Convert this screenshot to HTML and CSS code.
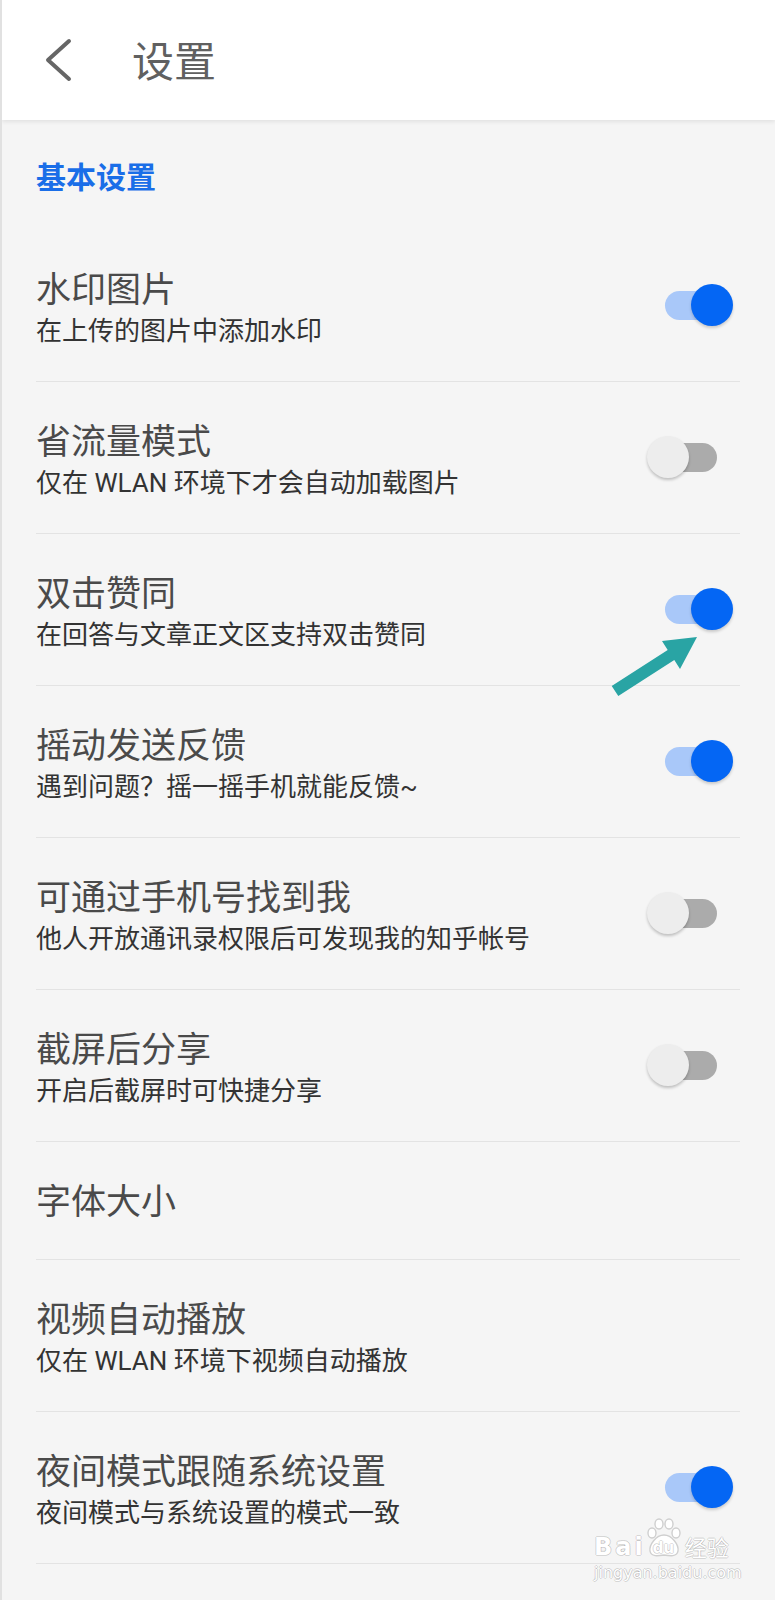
FILE: index.html
```html
<!DOCTYPE html>
<html lang="zh-CN">
<head>
    <meta charset="UTF-8">
    <meta name="viewport" content="width=device-width, initial-scale=1.0">
    <title>设置</title>
    <link rel="stylesheet" href="styles.css">
</head>
<body>
    <div class="page">
        <header class="top-bar">
            <button class="back-button" aria-label="返回">
                <svg width="28" height="44" viewBox="0 0 28 44">
                    <polyline points="24,3 3,22 24,41" fill="none" stroke="#666" stroke-width="4" stroke-linecap="round" stroke-linejoin="round"/>
                </svg>
            </button>
            <h1 class="top-title">设置</h1>
        </header>

        <section class="settings-group">
            <h2 class="group-title">基本设置</h2>
            <ul class="setting-list">
                <li class="setting-item">
                    <div class="setting-text">
                        <div class="setting-name">水印图片</div>
                        <div class="setting-desc">在上传的图片中添加水印</div>
                    </div>
                    <span class="switch on"></span>
                </li>
                <li class="setting-item">
                    <div class="setting-text">
                        <div class="setting-name">省流量模式</div>
                        <div class="setting-desc">仅在 WLAN 环境下才会自动加载图片</div>
                    </div>
                    <span class="switch"></span>
                </li>
                <li class="setting-item">
                    <div class="setting-text">
                        <div class="setting-name">双击赞同</div>
                        <div class="setting-desc">在回答与文章正文区支持双击赞同</div>
                    </div>
                    <span class="switch on"></span>
                </li>
                <li class="setting-item">
                    <div class="setting-text">
                        <div class="setting-name">摇动发送反馈</div>
                        <div class="setting-desc">遇到问题？摇一摇手机就能反馈~</div>
                    </div>
                    <span class="switch on"></span>
                </li>
                <li class="setting-item">
                    <div class="setting-text">
                        <div class="setting-name">可通过手机号找到我</div>
                        <div class="setting-desc">他人开放通讯录权限后可发现我的知乎帐号</div>
                    </div>
                    <span class="switch"></span>
                </li>
                <li class="setting-item">
                    <div class="setting-text">
                        <div class="setting-name">截屏后分享</div>
                        <div class="setting-desc">开启后截屏时可快捷分享</div>
                    </div>
                    <span class="switch"></span>
                </li>
                <li class="setting-item single">
                    <div class="setting-text">
                        <div class="setting-name">字体大小</div>
                    </div>
                </li>
                <li class="setting-item">
                    <div class="setting-text">
                        <div class="setting-name">视频自动播放</div>
                        <div class="setting-desc">仅在 WLAN 环境下视频自动播放</div>
                    </div>
                </li>
                <li class="setting-item">
                    <div class="setting-text">
                        <div class="setting-name">夜间模式跟随系统设置</div>
                        <div class="setting-desc">夜间模式与系统设置的模式一致</div>
                    </div>
                    <span class="switch on"></span>
                </li>
            </ul>
        </section>

        <!-- annotation arrow pointing at the double-tap switch -->
        <svg class="hint-arrow" width="775" height="1600" viewBox="0 0 775 1600">
            <polygon points="611.7,686 667.7,650 662,641 697,637 680,669 674.3,660 618.3,696" fill="#29a4a4"/>
        </svg>

        <div class="watermark">
            <div class="wm-logo">
                <span class="wm-bai">Bai</span>
                <span class="wm-paw">
                    <svg width="36" height="40" viewBox="0 0 36 40">
                        <g fill="#fff" stroke="#cfcfcf" stroke-width="1.4">
                            <ellipse cx="6" cy="15" rx="4" ry="5"/>
                            <ellipse cx="13" cy="6" rx="4" ry="5"/>
                            <ellipse cx="23" cy="6" rx="4" ry="5"/>
                            <ellipse cx="30" cy="15" rx="4" ry="5"/>
                            <path d="M18 17 C10 17 3 27 4 33 C5 39 12 38 18 37 C24 38 31 39 32 33 C33 27 26 17 18 17 Z"/>
                        </g>
                    </svg>
                    <span class="wm-du">du</span>
                </span>
                <span class="wm-jy">经验</span>
            </div>
            <div class="wm-url">jingyan.baidu.com</div>
        </div>
    </div>
</body>
</html>
```

FILE: styles.css
```css
body {
    margin: 0;
    background-color: #f5f5f5;
    font-family: Roboto, "Noto Sans CJK SC", sans-serif;
}
.page {
    position: relative;
    min-height: 1600px;
    border-left: 2px solid #e1e1e1;
    overflow: hidden;
}
.top-bar {
    display: flex;
    align-items: center;
    height: 120px;
    padding-left: 43px;
    background-color: #fff;
    box-shadow: 0 2px 4px rgba(0, 0, 0, 0.08);
}
.back-button {
    display: flex;
    padding: 0;
    border: none;
    background: none;
    cursor: pointer;
}
.top-title {
    margin: 0 0 0 59px;
    padding-top: 6px;
    font-size: 42px;
    font-weight: 400;
    line-height: 50px;
    color: #606060;
}
.group-title {
    margin: 0;
    padding: 38px 0 32px 34px;
    font-size: 30px;
    font-weight: 700;
    line-height: 40px;
    color: #1a6ee8;
}
.setting-list {
    list-style: none;
    margin: 0;
    padding: 0;
}
.setting-item {
    display: flex;
    align-items: center;
    justify-content: space-between;
    margin: 0 35px 0 34px;
    padding: 39px 0 32px;
    border-bottom: 1px solid #e3e3e3;
}
.setting-item.single {
    padding-bottom: 34px;
}
.setting-name {
    font-size: 35px;
    line-height: 44px;
    color: #4a4a4a;
}
.setting-desc {
    font-size: 26px;
    line-height: 36px;
    color: #333;
}
.switch {
    position: relative;
    flex-shrink: 0;
    width: 52px;
    height: 29px;
    margin: 0 23px 8px 0;
    border-radius: 15px;
    background-color: #ababab;
}
.switch::after {
    content: "";
    position: absolute;
    top: -6.5px;
    left: -18px;
    width: 42px;
    height: 42px;
    border-radius: 50%;
    background-color: #ededed;
    box-shadow: 0 2px 3px rgba(0, 0, 0, 0.22);
}
.switch.on {
    background-color: #a9c8f9;
}
.switch.on::after {
    left: 26px;
    background-color: #0466f4;
    box-shadow: 0 2px 3px rgba(0, 0, 0, 0.18);
}
.hint-arrow {
    position: absolute;
    top: 0;
    left: -2px;
    pointer-events: none;
}
.watermark {
    position: absolute;
    left: 592px;
    top: 1516px;
    width: 150px;
    color: #fff;
    text-shadow: 1px 0 0 rgba(0, 0, 0, 0.14), -1px 0 0 rgba(0, 0, 0, 0.14), 0 1px 0 rgba(0, 0, 0, 0.14), 0 -1px 0 rgba(0, 0, 0, 0.14);
    pointer-events: none;
}
.wm-logo {
    display: flex;
    align-items: flex-end;
    height: 42px;
}
.wm-bai {
    font-family: "DejaVu Sans", sans-serif;
    font-size: 24px;
    font-weight: 700;
    letter-spacing: 3px;
    line-height: 22px;
}
.wm-paw {
    position: relative;
    width: 36px;
    height: 40px;
}
.wm-du {
    position: absolute;
    left: 7px;
    bottom: 2px;
    font-family: "DejaVu Sans", sans-serif;
    font-size: 15px;
    font-weight: 700;
    line-height: 16px;
}
.wm-jy {
    margin-left: 3px;
    font-family: "Noto Sans CJK SC", sans-serif;
    font-size: 22px;
    line-height: 24px;
}
.wm-url {
    margin-top: 6px;
    font-family: "DejaVu Sans", sans-serif;
    font-size: 16px;
    line-height: 18px;
}
```
